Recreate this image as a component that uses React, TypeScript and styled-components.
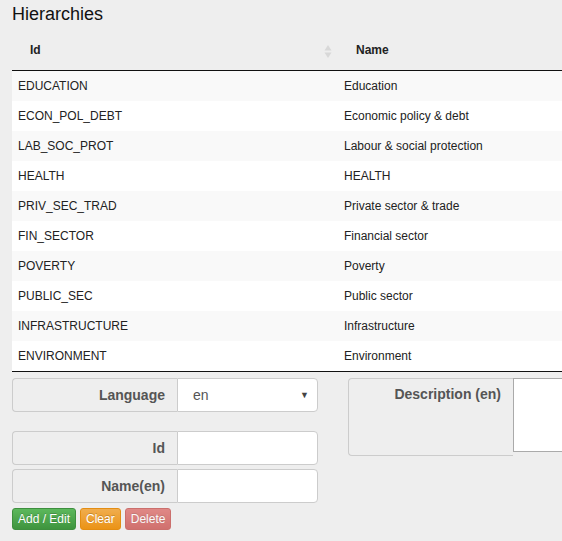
import React from 'react';
import styled, { createGlobalStyle } from 'styled-components';

const GlobalStyle = createGlobalStyle`
  html, body {
    margin: 0;
    background: #eeeeee;
    overflow: hidden;
  }
  body {
    font-family: "Liberation Sans", Arial, sans-serif;
    font-size: 12px;
    color: #333;
  }
`

const Page = styled.div`
  width: 562px;
  height: 541px;
  overflow: hidden;
  padding: 0 0 0 12px;
  box-sizing: border-box;
`

const Title = styled.h3`
  margin: 0;
  padding-top: 3px;
  height: 29px;
  font-size: 18px;
  font-weight: normal;
  line-height: 22px;
  color: #111;
`

const Table = styled.table`
  width: 700px;
  border-collapse: collapse;
  border-bottom: 1px solid #111;
  table-layout: fixed;
`

const HeadCell = styled.th<{ $width?: number }>`
  width: ${p => (p.$width ? `${p.$width}px` : 'auto')};
  box-sizing: border-box;
  position: relative;
  text-align: left;
  font-weight: bold;
  font-size: 12px;
  line-height: 17px;
  color: #222;
  padding: 10px 18px 11px;
  border-bottom: 1px solid #111;
`

const SortIcon = styled.svg`
  position: absolute;
  right: 6px;
  top: 12px;
`

const Row = styled.tr<{ $odd: boolean }>`
  background: ${p => (p.$odd ? '#f9f9f9' : '#ffffff')};
  & + & td {
    border-top: 1px solid #dddddd;
  }
`

const Cell = styled.td`
  padding: 6px;
  line-height: 18px;
  font-size: 12px;
  color: #222;
  white-space: nowrap;
`

const FormArea = styled.div`
  display: grid;
  grid-template-columns: 306px 1fr;
  column-gap: 30px;
  margin-top: 6px;
`

const Column = styled.div`
  display: flex;
  flex-direction: column;
`

const Group = styled.div<{ $mt?: number }>`
  display: flex;
  margin-top: ${p => p.$mt || 0}px;
`

const Addon = styled.div<{ $tall?: boolean }>`
  width: 165px;
  flex: none;
  box-sizing: border-box;
  background: #eeeeee;
  border: 1px solid #cccccc;
  border-right: none;
  border-radius: 4px 0 0 4px;
  font-size: 14px;
  font-weight: bold;
  color: #555;
  text-align: right;
  padding: ${p => (p.$tall ? '7px 12px 0' : '0 12px')};
  height: ${p => (p.$tall ? '78px' : '34px')};
  line-height: ${p => (p.$tall ? '17px' : '32px')};
`

const Field = styled.div`
  flex: 1;
  height: 34px;
  box-sizing: border-box;
  background: #fff;
  border: 1px solid #cccccc;
  border-radius: 0 4px 4px 0;
`

const SelectBox = styled(Field)`
  display: flex;
  align-items: center;
  justify-content: space-between;
  padding: 0 8px 0 15px;
  font-size: 14px;
  color: #555;
`

const Caret = styled.span`
  font-size: 9px;
  color: #444;
`

const TextArea = styled.div`
  width: 200px;
  height: 74px;
  box-sizing: border-box;
  background: #fff;
  border: 1px solid #aaaaaa;
`

const Buttons = styled.div`
  display: flex;
  gap: 4px;
  margin-top: 5px;
`

const Button = styled.button<{ $from: string; $to: string; $border: string; $faded?: boolean }>`
  font-family: "Liberation Sans", Arial, sans-serif;
  font-size: 12px;
  line-height: 18px;
  height: 22px;
  padding: 1px 5px;
  color: #fff;
  border: 1px solid ${p => p.$border};
  border-radius: 3px;
  background: linear-gradient(to bottom, ${p => p.$from} 0%, ${p => p.$to} 100%);
  opacity: ${p => (p.$faded ? 0.65 : 1)};
  text-shadow: 0 -1px 0 rgba(0, 0, 0, 0.2);
`

const rows: [string, string][] = [
  ['EDUCATION', 'Education'],
  ['ECON_POL_DEBT', 'Economic policy & debt'],
  ['LAB_SOC_PROT', 'Labour & social protection'],
  ['HEALTH', 'HEALTH'],
  ['PRIV_SEC_TRAD', 'Private sector & trade'],
  ['FIN_SECTOR', 'Financial sector'],
  ['POVERTY', 'Poverty'],
  ['PUBLIC_SEC', 'Public sector'],
  ['INFRASTRUCTURE', 'Infrastructure'],
  ['ENVIRONMENT', 'Environment'],
];

const App = () => {
  return (
    <Page>
      <GlobalStyle />
      <Title>Hierarchies</Title>
      <Table>
        <thead>
          <tr>
            <HeadCell $width={326}>
              Id
              <SortIcon width="8" height="15" viewBox="0 0 8 15">
                <path d="M4 1 L7.5 6.5 H0.5 Z" fill="#d8d8d8" />
                <path d="M4 14 L7.5 8.5 H0.5 Z" fill="#d8d8d8" />
              </SortIcon>
            </HeadCell>
            <HeadCell>Name</HeadCell>
          </tr>
        </thead>
        <tbody>
          {rows.map(([id, name], i) => (
            <Row key={id} $odd={i % 2 === 0}>
              <Cell>{id}</Cell>
              <Cell>{name}</Cell>
            </Row>
          ))}
        </tbody>
      </Table>
      <FormArea>
        <Column>
          <Group>
            <Addon>Language</Addon>
            <SelectBox>
              <span>en</span>
              <Caret>▼</Caret>
            </SelectBox>
          </Group>
          <Group $mt={19}>
            <Addon>Id</Addon>
            <Field />
          </Group>
          <Group $mt={4}>
            <Addon>Name(en)</Addon>
            <Field />
          </Group>
          <Buttons>
            <Button $from="#5cb85c" $to="#3e943e" $border="#3e8f3e">Add / Edit</Button>
            <Button $from="#f0ad4e" $to="#eb9316" $border="#e38d13">Clear</Button>
            <Button $from="#d9534f" $to="#c12e2a" $border="#b92c28" $faded>Delete</Button>
          </Buttons>
        </Column>
        <Column>
          <Group>
            <Addon $tall>Description (en)</Addon>
            <TextArea />
          </Group>
        </Column>
      </FormArea>
    </Page>
  );
};

export default App;
